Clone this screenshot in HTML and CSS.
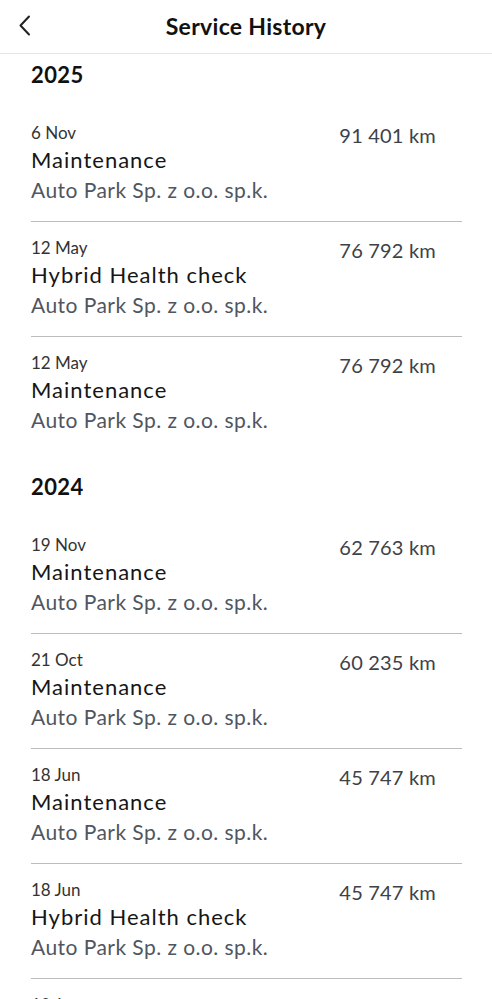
FILE: index.html
```html
<!DOCTYPE html>
<html lang="en">
<head>
  <meta charset="UTF-8" />
  <meta name="viewport" content="width=device-width, initial-scale=1.0"/>
  <title>Service History</title>
  <link rel="stylesheet" href="styles.css">
</head>
<body>

<!-- Cabecera -->
<header class="cabecera">
  <button class="volver" aria-label="Back">
    <svg width="14" height="22" viewBox="0 0 14 22">
      <path d="M11 1.5 L2.5 10.5 L11 19.5" fill="none" stroke="#222" stroke-width="2" stroke-linecap="round" stroke-linejoin="round"/>
    </svg>
  </button>
  <h1>Service History</h1>
  <span></span>
</header>

<main class="historial">

  <section class="anio">
    <h2>2025</h2>
    <ul class="servicios">
      <li class="servicio">
        <div class="info">
          <span class="fecha">6 Nov</span>
          <span class="tipo">Maintenance</span>
          <span class="taller">Auto Park Sp. z o.o. sp.k.</span>
        </div>
        <span class="km">91 401 km</span>
      </li>
      <li class="servicio">
        <div class="info">
          <span class="fecha">12 May</span>
          <span class="tipo">Hybrid Health check</span>
          <span class="taller">Auto Park Sp. z o.o. sp.k.</span>
        </div>
        <span class="km">76 792 km</span>
      </li>
      <li class="servicio">
        <div class="info">
          <span class="fecha">12 May</span>
          <span class="tipo">Maintenance</span>
          <span class="taller">Auto Park Sp. z o.o. sp.k.</span>
        </div>
        <span class="km">76 792 km</span>
      </li>
    </ul>
  </section>

  <section class="anio">
    <h2>2024</h2>
    <ul class="servicios">
      <li class="servicio">
        <div class="info">
          <span class="fecha">19 Nov</span>
          <span class="tipo">Maintenance</span>
          <span class="taller">Auto Park Sp. z o.o. sp.k.</span>
        </div>
        <span class="km">62 763 km</span>
      </li>
      <li class="servicio">
        <div class="info">
          <span class="fecha">21 Oct</span>
          <span class="tipo">Maintenance</span>
          <span class="taller">Auto Park Sp. z o.o. sp.k.</span>
        </div>
        <span class="km">60 235 km</span>
      </li>
      <li class="servicio">
        <div class="info">
          <span class="fecha">18 Jun</span>
          <span class="tipo">Maintenance</span>
          <span class="taller">Auto Park Sp. z o.o. sp.k.</span>
        </div>
        <span class="km">45 747 km</span>
      </li>
      <li class="servicio">
        <div class="info">
          <span class="fecha">18 Jun</span>
          <span class="tipo">Hybrid Health check</span>
          <span class="taller">Auto Park Sp. z o.o. sp.k.</span>
        </div>
        <span class="km">45 747 km</span>
      </li>
      <li class="servicio">
        <div class="info">
          <span class="fecha">10 Jan</span>
          <span class="tipo">Maintenance</span>
          <span class="taller">Auto Park Sp. z o.o. sp.k.</span>
        </div>
        <span class="km">30 212 km</span>
      </li>
    </ul>
  </section>

</main>

</body>
</html>
```

FILE: styles.css
```css
* { margin: 0; padding: 0; box-sizing: border-box; }
body {
  background: white;
  overflow: hidden;
  font-family: Lato, 'Noto Sans', sans-serif;
  color: #1a1a1a;
}

.cabecera {
  height: 54px;
  display: grid;
  grid-template-columns: 60px 1fr 60px;
  align-items: center;
  border-bottom: 1px solid #e6e6e6;
}

.volver {
  background: none;
  border: none;
  padding: 0 0 0 18px;
  height: 54px;
  display: flex;
  align-items: center;
  margin-top: -2px;
}

.cabecera h1 {
  text-align: center;
  font-size: 23px;
  font-weight: 700;
  letter-spacing: 0.3px;
  color: #111;
  margin-top: -1px;
}

.historial {
  padding: 0 30px 0 31px;
}

.anio h2 {
  font-size: 22px;
  font-weight: 700;
  line-height: 28px;
  letter-spacing: 0.4px;
  color: #111;
  padding-top: 7px;
  padding-bottom: 18px;
}

.anio + .anio h2 {
  padding-top: 22px;
}

.servicios {
  list-style: none;
}

.servicio {
  display: flex;
  justify-content: space-between;
  align-items: flex-start;
  padding: 15px 26px 18px 0;
  border-bottom: 1px solid #bcbcbc;
}

.servicio:last-child {
  border-bottom: none;
}

.info {
  display: flex;
  flex-direction: column;
}

.fecha {
  font-size: 17px;
  line-height: 22px;
  color: #333;
}

.tipo {
  font-size: 22px;
  line-height: 31px;
  letter-spacing: 1px;
  color: #161616;
}

.taller {
  font-size: 21px;
  line-height: 27px;
  letter-spacing: 0.45px;
  color: #50565f;
  margin-top: 1px;
}

.km {
  font-size: 20px;
  line-height: 26px;
  letter-spacing: 0.2px;
  color: #3e4248;
}
```
